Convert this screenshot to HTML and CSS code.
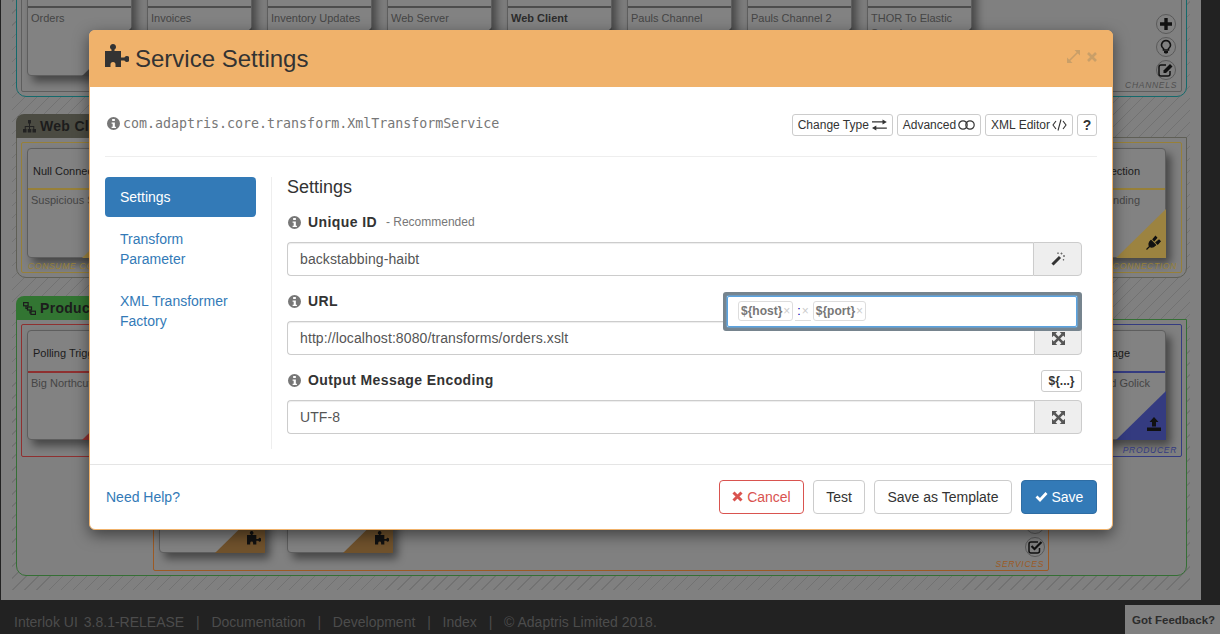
FILE: index.html
```html
<!DOCTYPE html>
<html>
<head>
<meta charset="utf-8">
<title>Service Settings</title>
<link rel="stylesheet" href="styles.css">
</head>
<body>
<svg class="defs" width="0" height="0">
  <symbol id="i-puzzle" viewBox="0 0 24 24"><path d="M0 7h6.500V5.600a3 3 0 1 1 3 0V7H16v6.500h3.400a3 3 0 1 1 0 3H16V23H10.500v-2.500a2.500 2.500 0 0 0-5 0V23H0z"/></symbol>
  <symbol id="i-info" viewBox="0 0 24 24"><path fill-rule="evenodd" d="M12 0a12 12 0 1 0 0 24a12 12 0 0 0 0-24zM9.500 3.500h5v4h-5zM8.500 10h6v8h2v2.500h-8V18h2v-5.500h-2z"/></symbol>
  <symbol id="i-move" viewBox="0 0 16 16"><path d="M0 0h6.500L0 6.500zM16 0v6.500L9.500 0zM0 16V9.500L6.500 16zM16 16H9.500L16 9.500z"/><path d="M3 3l10 10M13 3L3 13" stroke="currentColor" stroke-width="3.200"/></symbol>
  <symbol id="i-plug" viewBox="0 0 16 16"><path d="M0.500 15.500l3-3M5 6.500l4.500 4.500c-2 2-4 2.500-5.500 1.500S2.500 8.500 5 6.500zM7 5.500l2.500-3 1.200 1.200-2.500 3zM10 8.500l3-2.500 1.200 1.200-2.500 3z" stroke="currentColor" stroke-width="1.200"/></symbol>
  <symbol id="i-upload" viewBox="0 0 16 16"><path d="M8 1l4.500 5H10v4.500H6V6H3.500zM1 11.500h14V15H1z"/></symbol>
</svg>

<div class="board-wrap">
  <div class="board">
    <section class="lane lane-channels">
      <div class="box box-channels">
        <div class="node-row">
          <div class="node"><div class="node-head"></div><div class="node-body">Orders</div><i class="corner"></i></div>
          <div class="node"><div class="node-head"></div><div class="node-body">Invoices</div><i class="corner"></i></div>
          <div class="node"><div class="node-head"></div><div class="node-body">Inventory Updates</div><i class="corner"></i></div>
          <div class="node"><div class="node-head"></div><div class="node-body">Web Server</div><i class="corner"></i></div>
          <div class="node"><div class="node-head"></div><div class="node-body strong">Web Client</div><i class="corner"></i></div>
          <div class="node"><div class="node-head"></div><div class="node-body">Pauls Channel</div><i class="corner"></i></div>
          <div class="node"><div class="node-head"></div><div class="node-body">Pauls Channel 2</div><i class="corner"></i></div>
          <div class="node"><div class="node-head"></div><div class="node-body wrap">THOR To Elastic Search</div><i class="corner"></i></div>
        </div>
        <div class="tools tools-channels">
          <span class="tool"><svg width="14" height="14" viewBox="0 0 14 14"><path d="M7 1v12M1 7h12" stroke="#111" stroke-width="3.400"/></svg></span>
          <span class="tool"><svg width="12" height="16" viewBox="0 0 12 16"><path d="M6 1.500a4.500 4.500 0 0 0-2.500 8.200V11h5V9.700A4.500 4.500 0 0 0 6 1.500z" fill="none" stroke="#111" stroke-width="1.600"/><path d="M4 12h4v1.500l-1 1H5l-1-1z" fill="#111"/></svg></span>
          <span class="tool"><svg width="16" height="14" viewBox="0 0 16 14"><path d="M12 8v3a2 2 0 0 1-2 2H3a2 2 0 0 1-2-2V4a2 2 0 0 1 2-2h5" fill="none" stroke="#111" stroke-width="1.500"/><path d="M5.500 7.500L12 1l2.500 2.500L8 10H5.500z" fill="#111"/></svg></span>
        </div>
        <span class="lane-label label-channels">CHANNELS</span>
      </div>
    </section>

    <section class="lane lane-web">
      <h3 class="lane-tab tab-web">
        <svg width="13" height="13" viewBox="0 0 13 13"><path d="M5 0h3v3.500H5zM0 9h3.500v3.500H0zM4.750 9h3.500v3.500h-3.500zM9.500 9H13v3.500H9.500zM6 3.500h1V6h4.250v3h-1V7H7v2H6V7H2.750v2h-1V6H6z" fill="#222"/></svg>
        Web Client
      </h3>
      <div class="box-row">
        <div class="box box-gold">
          <div class="node node-tall"><div class="node-head gold-line">Null Connection</div><div class="node-body">Suspicious Sending</div><i class="corner corner-gold"></i></div>
          <span class="lane-label label-gold label-left">CONSUME CONNECTION</span>
        </div>
        <div class="box box-gold box-end">
          <div class="node node-tall node-end"><div class="node-head gold-line">Connection</div><div class="node-body">Sending</div><i class="corner corner-gold"><svg width="16" height="16"><use href="#i-plug"/></svg></i></div>
          <span class="lane-label label-gold">CONNECTION</span>
        </div>
      </div>
    </section>

    <section class="lane lane-product">
      <h3 class="lane-tab tab-product">
        <svg width="13" height="13" viewBox="0 0 13 13" fill="none" stroke="#1c1c1c" stroke-width="1.200"><rect x="0.600" y="0.600" width="4.500" height="3.200"/><rect x="4.500" y="5" width="4" height="3"/><rect x="8" y="9.200" width="4.500" height="3.200"/><path d="M3 4v2.500h1.500M7 8v2.800h1"/></svg>
        Producer
      </h3>
      <div class="box-row box-row-product">
        <div class="box box-red">
          <div class="node node-tall"><div class="node-head red-line">Polling Trigger</div><div class="node-body">Big Northcutt</div><i class="corner corner-red"></i></div>
        </div>
        <div class="box box-blue box-end">
          <div class="node node-tall node-end node-end-blue"><div class="node-head blue-line">Message</div><div class="node-body">Richard Golick</div><i class="corner corner-blue"><svg width="16" height="16"><use href="#i-upload"/></svg></i></div>
          <span class="lane-label label-blue">PRODUCER</span>
        </div>
      </div>
      <div class="box box-services">
        <div class="node-row node-row-services">
          <div class="node node-service"><i class="corner corner-orange"><svg width="14" height="14"><use href="#i-puzzle"/></svg></i></div>
          <div class="node node-service"><i class="corner corner-orange"><svg width="14" height="14"><use href="#i-puzzle"/></svg></i></div>
        </div>
        <div class="tools tools-services">
          <span class="tool"><svg width="14" height="14" viewBox="0 0 14 14"><path d="M3 3h8v8H3z" fill="#111"/></svg></span>
          <span class="tool"><svg width="15" height="14" viewBox="0 0 15 14" fill="none" stroke="#111"><path d="M11.500 8v3a2 2 0 0 1-2 2H3a2 2 0 0 1-2-2V4a2 2 0 0 1 2-2h7" stroke-width="1.500"/><path d="M3.500 6l3 3L13.500 2" stroke-width="2.200"/></svg></span>
        </div>
        <span class="lane-label label-orange">SERVICES</span>
      </div>
    </section>
  </div>
</div>

<footer class="page-footer">
  <span class="foot-version"><span>Interlok UI</span><span>3.8.1-RELEASE</span></span>
  <span class="foot-sep">|</span><a>Documentation</a>
  <span class="foot-sep">|</span><a>Development</a>
  <span class="foot-sep">|</span><a>Index</a>
  <span class="foot-sep">|</span><span>© Adaptris Limited 2018.</span>
</footer>
<div class="feedback">Got Feedback?</div>

<div class="modal">
  <header class="modal-head">
    <svg class="head-icon" width="24" height="24"><use href="#i-puzzle"/></svg>
    <h1>Service Settings</h1>
    <span class="head-tools">
      <svg width="13" height="13" viewBox="0 0 13 13"><path d="M7.500 0H13v5.500zM0 7.500V13h5.500z"/><path d="M2 11l9-9" stroke="currentColor" stroke-width="1.600"/></svg>
      <svg width="10" height="10" viewBox="0 0 10 10"><path d="M1 1l8 8M9 1l-8 8" stroke="currentColor" stroke-width="2.600"/></svg>
    </span>
  </header>

  <div class="modal-body">
    <div class="type-row">
      <svg class="info" width="13" height="13"><use href="#i-info"/></svg>
      <code class="type-name">com.adaptris.core.transform.XmlTransformService</code>
      <div class="type-btns">
        <button class="btn-xs btn-change">Change Type <svg width="15" height="12" viewBox="0 0 24 18"><path d="M0 3h17V0l7 4-7 4V5H0zM24 13H7v-3l-7 4 7 4v-3h17z"/></svg></button>
        <button class="btn-xs">Advanced <svg width="17" height="10" viewBox="0 0 17 10" fill="none" stroke="#333" stroke-width="1.200"><circle cx="5" cy="5" r="4.200"/><circle cx="12" cy="5" r="4.200"/></svg></button>
        <button class="btn-xs">XML Editor <svg width="15" height="12" viewBox="0 0 15 12" fill="none" stroke="#333" stroke-width="1.100"><path d="M4 2L1 6l3 4M11 2l3 4-3 4M9 0.500L6 11.500"/></svg></button>
        <button class="btn-xs btn-help">?</button>
      </div>
    </div>
    <hr class="rule">
    <div class="columns">
      <nav class="side-nav">
        <a class="active">Settings</a>
        <a>Transform Parameter</a>
        <a>XML Transformer Factory</a>
      </nav>
      <div class="main">
        <h4>Settings</h4>

        <div class="field">
          <div class="field-label">
            <svg class="info" width="13" height="13"><use href="#i-info"/></svg>
            <label>Unique ID</label><small>- Recommended</small>
          </div>
          <div class="input-group">
            <input type="text" value="backstabbing-haibt">
            <span class="addon addon-wide"><svg width="14" height="14" viewBox="0 0 14 14"><path d="M1.500 12.500l7.500-7.500" stroke="#333" stroke-width="3"/><path d="M10.500 0.500v2M9.500 1.500h2M13 3v2M12 4h2M12.500 7v1.500M11.800 7.700h1.400M7 0.500v1.500M6.300 1.200h1.400" stroke="#666" stroke-width="0.900"/></svg></span>
          </div>
        </div>

        <div class="field">
          <div class="field-label">
            <svg class="info" width="13" height="13"><use href="#i-info"/></svg>
            <label>URL</label>
          </div>
          <div class="input-group">
            <input type="text" value="http://localhost:8080/transforms/orders.xslt">
            <span class="addon"><svg class="move" width="13" height="13"><use href="#i-move"/></svg></span>
          </div>
          <div class="token-pop">
            <div class="token-field">
              <span class="token">${host}<b>×</b></span>
              <span class="token-plain">:<b>×</b></span>
              <span class="token">${port}<b>×</b></span>
            </div>
          </div>
        </div>

        <div class="field">
          <div class="field-label">
            <svg class="info" width="13" height="13"><use href="#i-info"/></svg>
            <label>Output Message Encoding</label>
            <button class="btn-xs btn-var">${...}</button>
          </div>
          <div class="input-group">
            <input type="text" value="UTF-8">
            <span class="addon"><svg class="move" width="13" height="13"><use href="#i-move"/></svg></span>
          </div>
        </div>
      </div>
    </div>
  </div>

  <footer class="modal-foot">
    <a class="help-link">Need Help?</a>
    <div class="foot-btns">
      <button class="btn btn-cancel"><svg width="11" height="11" viewBox="0 0 11 11"><path d="M1.500 1.500l8 8M9.500 1.500l-8 8" stroke="#d9534f" stroke-width="3"/></svg> Cancel</button>
      <button class="btn btn-test">Test</button>
      <button class="btn btn-template">Save as Template</button>
      <button class="btn btn-save"><svg width="13" height="11" viewBox="0 0 13 11"><path d="M1.500 5.500l3.500 3.500 6.500-7" fill="none" stroke="#fff" stroke-width="2.800"/></svg> Save</button>
    </div>
  </footer>
</div>
</body>
</html>
```

FILE: styles.css
```css
* { box-sizing: border-box; }
html, body { margin: 0; padding: 0; height: 634px; overflow: hidden; }
body { background: #222; font-family: "Liberation Sans", Arial, sans-serif; font-size: 14px; color: #333; position: relative; }
.defs { position: absolute; }

/* dimmed canvas behind the dialog */
.board-wrap { margin-left: 1px; width: 1200px; height: 600px; background: #808080; padding: 0 11px 10px; overflow: hidden; }
.board { position: relative; width: 1178px; height: 590px; background: repeating-linear-gradient(-45deg, #808080 0 7.500px, #727272 7.500px 8.500px); }

.lane { position: absolute; left: 4px; width: 1171px; border: 1px solid #5e5e5e; border-radius: 0 0 10px 10px; background: #808080; padding: 4px; }
.lane-channels { top: -40px; height: 137px; border-color: #146a6c; }
.lane-web { top: 137px; height: 141px; border-color: #5f5f56; }
.lane-product { top: 319px; height: 257px; border-color: #356f35; }

.lane-tab { position: absolute; left: -1px; top: -24px; width: 300px; height: 24px; margin: 0; padding: 0 7px; display: flex; align-items: center; gap: 4px; border-radius: 8px 0 0 0; font-size: 14px; font-weight: bold; color: #1c1c1c; letter-spacing: 0.3px; }
.tab-web { background: #4b4b42; }
.tab-product { background: #327532; }

.box { position: relative; border: 1px solid #5e5e5e; border-radius: 2px; }
.box-channels { height: 100%; padding: 0 5px; }
.box-row { display: flex; height: 131px; justify-content: space-between; }
.box-row-product { height: 133px; }
.box-row .box { width: 500px; padding: 5px; }
.box-end { display: flex; justify-content: flex-end; }
.box-row .box-end { padding-right: 15px; }
.box-gold { border-color: #978038; }
.box-red { border-color: #8f3030; }
.box-blue { border-color: #343b80; }

.box-services { position: absolute; left: 136px; top: 144px; width: 896px; height: 107px; border-color: #9c5a24; }
.node-row { display: flex; gap: 15px; }
.node-row-services { gap: 22px; padding: 0 5px; position: absolute; bottom: 17px; }

.node { position: relative; width: 105px; height: 110px; flex: none; border: 1px solid #5e5e5e; border-radius: 4px; background: #828282; box-shadow: 5px 6px 8px rgba(0, 0, 0, 0.45); font-size: 11px; color: #454545; }
.node-service { width: 106px; }
.node-head { height: 41px; border-bottom: 2px solid #4d4d4d; padding: 0 5px; color: #1c1c1c; line-height: 41px; white-space: nowrap; overflow: hidden; }
.node-tall .node-head { padding-top: 2px; }
.gold-line { border-color: #978038; }
.red-line, .blue-line { height: 42px; }
.red-line { border-color: #8f3030; }
.blue-line { border-color: #343b80; }
.node-body { padding: 3px 3px; line-height: 15px; white-space: nowrap; }
.node-body.wrap { white-space: normal; }
.strong { font-weight: bold; color: #2c2c2c; }
/* only the tail of these labels shows beside the dialog */
.node-end .node-head, .node-end .node-body { text-align: right; padding-right: 25px; }
.node-end-blue .node-head { padding-right: 35px; }
.node-end-blue .node-body { padding-right: 15px; }

.corner { position: absolute; right: -1px; bottom: -1px; width: 50px; height: 49px; background: #464646; clip-path: polygon(100% 0, 100% 100%, 0 100%); display: flex; align-items: flex-end; justify-content: flex-end; padding: 0 4px 8px 0; color: #111; fill: #111; }
.corner-gold { background: #9c8340; }
.corner-red { background: #8f3030; }
.corner-blue { background: #343b80; }
.corner-orange { background: #70522c; }

.tools { position: absolute; display: flex; flex-direction: column; gap: 3px; }
.tools-channels { right: 5px; top: 48px; }
.tools-services { right: 3px; top: 49px; }
.tool { width: 20px; height: 20px; border: 1px solid #5a5a5a; border-radius: 50%; display: flex; align-items: center; justify-content: center; }

.lane-label { position: absolute; right: 4px; bottom: -1px; font-size: 8.500px; font-style: italic; letter-spacing: 0.700px; line-height: 13px; color: #505050; }
.label-left { left: 6px; right: auto; }
.label-gold { color: #978038; }
.label-blue { color: #343b80; }
.label-orange { color: #9c5a24; }

/* page footer */
.page-footer { height: 34px; padding-left: 14px; display: flex; align-items: center; gap: 11.800px; color: #4c4c4c; padding-top: 9px; }
.foot-version { display: flex; gap: 6px; }
.feedback { position: absolute; right: 0; bottom: 0; width: 95px; height: 29px; padding: 9px 0 0 7px; background: #808080; color: #2c2c2c; font-size: 11.500px; font-weight: bold; white-space: nowrap; overflow: hidden; }

/* dialog */
.modal { position: absolute; left: 89px; top: 30px; width: 1024px; height: 500px; display: flex; flex-direction: column; background: #fff; border: 1px solid #f0b26b; border-radius: 6px; box-shadow: 0 5px 15px rgba(0, 0, 0, 0.5); }
.modal-head { height: 57px; margin: -1px -1px 0; padding: 0 16px; display: flex; align-items: center; background: #f0b26b; border-radius: 6px 6px 0 0; flex: none; }
.modal-head h1 { margin: 0 0 0 6px; font-size: 24px; font-weight: normal; color: #333; }
.head-icon { fill: #333; margin-bottom: 5px; }
.head-tools { margin-left: auto; margin-bottom: 4px; display: flex; align-items: center; gap: 7px; color: #c99f68; fill: #c99f68; }

.modal-body { flex: 1; padding: 27px 15px 0; }
.type-row { height: 22px; display: flex; align-items: center; }
.info { fill: #777; flex: none; }
.type-row .info { margin: 0 0 3px 2px; }
.type-name { margin: 0 0 3px 3px; font-family: "DejaVu Sans Mono", monospace; font-size: 13.300px; color: #777; }
.type-btns { margin-left: auto; display: flex; gap: 4px; }

.btn-xs { height: 22px; padding: 0 5px; background: #fff; border: 1px solid #ccc; border-radius: 3px; font: 12px "Liberation Sans", Arial, sans-serif; color: #333; display: flex; align-items: center; gap: 2px; white-space: nowrap; fill: #333; }
.btn-change { width: 101px; gap: 3px; }
.btn-help { width: 20px; justify-content: center; font-size: 14px; font-weight: bold; }
.btn-var { width: 41px; margin-left: auto; justify-content: center; font-weight: bold; align-self: flex-start; }

.rule { margin: 20px 0; border: 0; border-top: 1px solid #eee; }
.columns { display: flex; }
.side-nav { width: 151px; margin-right: 15px; display: flex; flex-direction: column; gap: 2px; flex: none; }
.side-nav a { padding: 10px 15px; line-height: 20px; color: #337ab7; border-radius: 4px; }
.side-nav a.active { background: #337ab7; color: #fff; }

.main { flex: 1; height: 272px; padding: 0 15px; border-left: 1px solid #eee; }
.main h4 { margin: 0; font-size: 18px; font-weight: normal; line-height: 20px; color: #333; }
.field { position: relative; margin-top: 15px; }
.field-label { height: 20px; margin-bottom: 10px; padding-left: 1px; display: flex; align-items: center; }
.field-label label { margin-left: 7px; font-weight: bold; letter-spacing: 0.400px; }
.field-label small { margin-left: 9px; font-size: 12px; color: #777; }

.input-group { display: flex; height: 34px; }
.input-group input { flex: 1; min-width: 0; padding: 0 12px; border: 1px solid #ccc; border-right: 0; border-radius: 4px 0 0 4px; font: 14px "Liberation Sans", Arial, sans-serif; letter-spacing: 0.100px; color: #555; box-shadow: inset 0 1px 1px rgba(0, 0, 0, 0.075); }
.addon { width: 48px; flex: none; display: flex; align-items: center; justify-content: center; background: #eee; border: 1px solid #ccc; border-radius: 0 4px 4px 0; }
.addon-wide { width: 49px; }
.move { fill: #555; color: #555; }

.token-pop { position: absolute; right: 0; top: 1px; width: 359px; border: 4px solid #76848e; border-right-width: 5px; border-radius: 3px; }
.token-field { height: 31px; padding: 4px 10px; display: flex; align-items: flex-start; background: #fff; border: 1px solid #5ba3e0; border-radius: 2px; box-shadow: 0 0 1px 1px rgba(102, 175, 233, 0.6); }
.token { height: 20px; padding: 0 2px; display: flex; align-items: center; border: 1px solid #ddd; border-radius: 3px; font-size: 12px; font-weight: bold; color: #777; }
.token b, .token-plain b { margin-left: 1px; color: #ccc; font-weight: normal; }
.token-plain { height: 20px; margin: 0 2px 0 2px; padding: 0 2px; display: flex; align-items: center; border-bottom: 1px solid #ddd; font-size: 12px; color: #00a; }

.modal-foot { height: 65px; padding: 15px 15px 15px 16px; display: flex; align-items: center; justify-content: space-between; border-top: 1px solid #e5e5e5; flex: none; }
.help-link { color: #337ab7; }
.foot-btns { display: flex; gap: 9px; }
.btn { height: 34px; padding: 0; background: #fff; border: 1px solid #ccc; border-radius: 4px; font: 14px "Liberation Sans", Arial, sans-serif; color: #333; white-space: nowrap; }
.btn-cancel { width: 85px; border-color: #d9534f; color: #d9534f; }
.btn-test { width: 52px; }
.btn-template { width: 138px; }
.btn-save { width: 76px; background: #337ab7; border-color: #2e6da4; color: #fff; }
```
